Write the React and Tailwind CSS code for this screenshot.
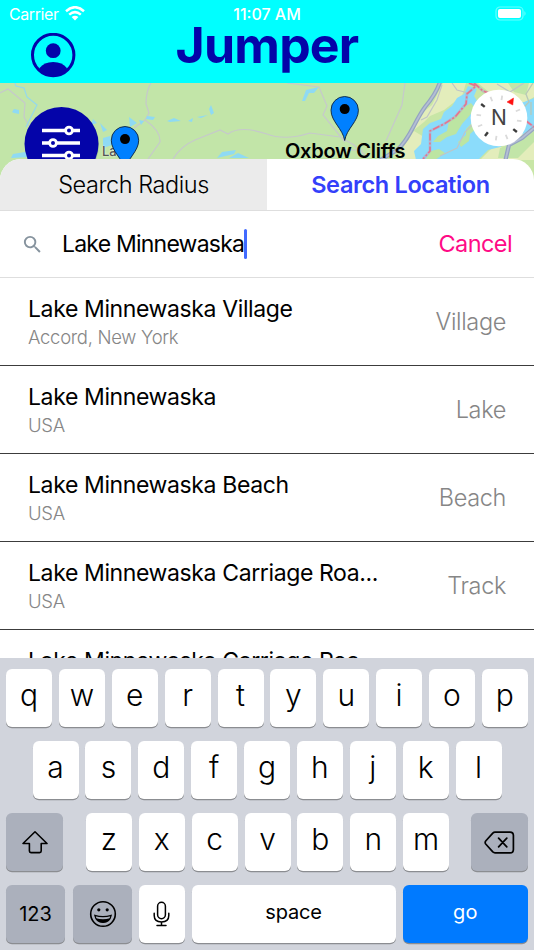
import React from "react";

const results = [
  { title: "Lake Minnewaska Village", place: "Accord, New York", kind: "Village" },
  { title: "Lake Minnewaska", place: "USA", kind: "Lake" },
  { title: "Lake Minnewaska Beach", place: "USA", kind: "Beach" },
  { title: "Lake Minnewaska Carriage Roa...", place: "USA", kind: "Track" },
];

function Key({ children, className = "w-[46px] bg-white" }) {
  return (
    <div className={`flex h-[58px] items-center justify-center rounded-[6px] shadow-[0_1.3px_0_#8b8d91] ${className}`}>
      {children}
    </div>
  );
}

function Letter({ c }) {
  return (
    <Key>
      <span className="relative -top-[3px] text-[30px] font-[350] leading-none text-black">{c}</span>
    </Key>
  );
}

function Pin({ x, y }) {
  return (
    <g transform={`translate(${x} ${y})`}>
      <path d="M0 44 C-2 32 -13.7 25 -13.7 13.7 A13.7 13.7 0 0 1 13.7 13.7 C13.7 25 2 32 0 44Z" fill="#0080ff" stroke="#10243c" strokeWidth="0.9" />
      <circle cx="0" cy="12.6" r="5" fill="#000" />
    </g>
  );
}

const ticks = [0, 30, 60, 90, 120, 150, 180, 210, 240, 270, 300, 330];

function MapView() {
  return (
    <svg className="absolute inset-0" width="534" height="97" viewBox="0 83 534 97">
      <rect y="83" width="534" height="97" fill="#c2e5a8" />
      {/* farmland and river on the east side */}
      <path d="M440 83 L534 83 V180 H398 L400 148 L414 127 L427 105Z" fill="#c8e6a6" />
      <path d="M443 83 H466 L462 96 L444 110 L430 116 L424 122 L414 130 L422 113 L432 105Z M404 146 L414 131 L424 137 L416 160 H398Z M478 83 H534 V97 L522 104 L490 93Z M480 160 L492 148 L510 146 L534 122 V160Z" fill="#e3edbb" />
      <path d="M508 83 H529 L526 95 L514 92Z M500 148 L516 142 L534 130 V142 L518 158 H498Z" fill="#c2e5a8" />
      <path d="M477 89 L468 86 L464 94 L457 98 L452 106 L444 112 L441 119 L430 123 L423 129 L421 144 L414 151 L416 160 L478 160 L488 150 L500 147 L512 140 L534 128 V98 L524 102 L510 103 L480 106 L474 96Z" fill="#8bdcfb" />
      <path d="M466 106 L471 103 L475 108 L470 115 L462 124 L456 134 L447 137 L440 142 L433 142 L438 136 L447 131 L449 121 L457 114Z M425 160 L431 151 L439 149 L445 153 L435 160Z M458 142 L466 135 L466 129 L472 123 L478 127 L470 134 L469 141 L461 147Z" fill="#bce5a2" />
      <path d="M533 83 L526 94 L529 102 L520 111 M531 102 V115" fill="none" stroke="#b8c8b8" strokeWidth="1.3" />
      <path d="M497 84 L510 92 L524 83 M421 120 L427 117 L437 100 L442 85 M440 156 L457 148 L465 132 L475 122 M452 83 L457 90 L468 93" fill="none" stroke="#bfc5c7" strokeWidth="1.2" />
      <path d="M440 82 Q436 94 425 107 C414 122 410 139 397 150 L377 162" fill="none" stroke="#94a3c2" strokeWidth="4.2" />
      <path d="M440 82 Q436 94 425 107 C414 122 410 139 397 150 L377 162" fill="none" stroke="#b4bed4" strokeWidth="1.8" />
      <path d="M505 162 L509 145 L522 138 L534 128" fill="none" stroke="#94a3c2" strokeWidth="4.2" />
      <path d="M505 162 L509 145 L522 138 L534 128" fill="none" stroke="#b4bed4" strokeWidth="1.8" />
      <path d="M469 83 L476 86 L467 94 L466 104 L455 117 L444 124 L430 131 V151 L423 159 M474 83 L483 91 L500 97 M526 121 L534 127" fill="none" stroke="#b9a9c4" strokeWidth="2.8" opacity=".6" />
      <path d="M469 83 L476 86 L467 94 L466 104 L455 117 L444 124 L430 131 V151 L423 159 M474 83 L483 91 L500 97 M526 121 L534 127" fill="none" stroke="#e8738c" strokeWidth="1.6" strokeDasharray="7 2 2 2" />
      {/* paths */}
      <path d="M0 93 L8 89 L25 103 L24 117 L29 126 M151 83 Q146 91 146 104 L149 113 L145 120 Q161 131 160 142 L148 159 M145 120 L134 128 M173 159 Q181 146 195 140 L220 130 L228 134 Q240 125 267 134 Q285 141 310 133 L340 137 L354 145 L367 157 M287 83 L319 87 L327 106 L323 115 L345 142 M405 83 L402 105 L386 141 M345 150 H363" fill="none" stroke="#c6c9cb" strokeWidth="1.2" />
      <path d="M15 83 L16 86 L24 88 L27 97 L37 105 L26 127" fill="none" stroke="#95d9ec" strokeWidth="1.2" />
      <path d="M12 112 L14 109 L19 110 V114 L14 113Z M11 158 L13 154 L25 152 L32 157Z M93 119 L97 123 L91 125Z M100 123 L107 130 L103 132Z M129 117 L137 123 L130 127Z M139 120 L144 121 L141 125Z M147 116 L155 117 L153 120 L146 119Z M167 121 L174 118 L181 121 L170 122Z M188 121 L193 118 L192 122Z M197 117 L208 115 L201 118Z M209 109 L211 105 L214 113 L211 115Z M217 158 L222 152 L236 150 L234 154Z M229 158 L238 153 L249 158Z M302 101 L306 90 L319 87 L314 93 L309 93 L305 101Z M103 138 L110 136 L112 145 L103 148Z" fill="#8fdaf3" />
      <circle cx="62" cy="145" r="37" fill="#59805d" opacity=".25" />
      <circle cx="61.5" cy="144" r="37" fill="#0404a9" />
      <g stroke="#fff" strokeWidth="3.4" fill="#0404a9">
        <path d="M42 130.5 H80 M42 143 H80 M42 155.5 H80" />
        <circle cx="69" cy="130.5" r="3.4" strokeWidth="2.8" />
        <circle cx="53" cy="143" r="3.4" strokeWidth="2.8" />
        <circle cx="69" cy="155.5" r="3.4" strokeWidth="2.8" />
      </g>
    </svg>
  );
}

function MapOverlay() {
  return (
    <svg className="absolute inset-0" width="534" height="97" viewBox="0 83 534 97">
      <Pin x={125} y={126.5} />
      <Pin x={344.7} y={96.5} />
      <circle cx="499" cy="118" r="28.3" fill="#fff" />
      {ticks.map((a, i) => (
        <path key={a} d="M499 95.3 v4.6" transform={`rotate(${a + 38} 499 118)`} stroke={i === 0 ? "#fff" : i % 3 === 0 ? "#3c3c3c" : "#dadada"} strokeWidth={i % 3 === 0 ? 2.4 : 1.8} />
      ))}
      <path d="M513.5 98 L507 102 L512.8 105Z" fill="#ff1010" stroke="#ff1010" strokeWidth=".5" />
    </svg>
  );
}

export default function App() {
  return (
    <div className="flex h-[950px] w-[534px] flex-col overflow-hidden bg-white font-['Inter',sans-serif]">
      <header className="h-[83px] shrink-0 bg-[#00ffff] text-white">
        <div className="flex h-[27px] items-center justify-between pl-[9px] pr-[7px]">
          <div className="flex w-[100px] items-center gap-[6px]">
            <span className="text-[16px] leading-none tracking-[-0.4px]">Carrier</span>
            <svg width="20" height="15" viewBox="0 0 20 15" fill="none" stroke="#fff" strokeWidth="2.5">
              <path d="M1 5.2 Q10 -2.8 19 5.2 M4.2 8.6 Q10 3.6 15.8 8.6" />
              <path d="M6.6 11 Q10 8.3 13.4 11 L10 14.5Z" fill="#fff" stroke="none" />
            </svg>
          </div>
          <span className="relative -left-[1px] text-[16px] font-medium leading-none">11:07 AM</span>
          <div className="flex w-[100px] justify-end">
            <svg width="32" height="16" viewBox="0 0 32 16">
              <rect x="1" y="1" width="27" height="13" rx="4" fill="none" stroke="#fff" strokeOpacity=".4" strokeWidth="1.2" />
              <rect x="3" y="3" width="23" height="9" rx="2" fill="#fff" />
              <path d="M29.5 5 Q31.5 7.5 29.5 10Z" fill="#fff" opacity=".5" />
            </svg>
          </div>
        </div>
        <div className="grid h-[56px] grid-cols-[1fr_auto_1fr] items-start">
          <svg className="ml-[31px] mt-[6px]" width="45" height="45" viewBox="0 0 45 45">
            <circle cx="22.2" cy="22" r="20.7" fill="none" stroke="#0404a9" strokeWidth="3" />
            <circle cx="22.2" cy="17.7" r="7.4" fill="#0404a9" />
            <path d="M8.6 35 Q13 29 22.2 29 Q31.4 29 35.8 35 L36 37 Q22 50 8 37Z" fill="#0404a9" />
          </svg>
          <h1 className="text-[50px] font-bold leading-[36px] tracking-[-0.8px] text-[#0404a9]">Jumper</h1>
        </div>
      </header>

      <section className="relative h-[97px] shrink-0">
        <MapView />
        <span className="absolute left-[102px] top-[60px] text-[13px] font-medium leading-[16px] text-[#555] [text-shadow:0_0_2px_#fff]">La</span>
        <MapOverlay />
        <span className="absolute left-[285px] top-[56px] whitespace-nowrap text-[20px] font-semibold leading-[24px] tracking-[-0.27px] text-black">Oxbow Cliffs</span>
        <span className="absolute left-[491px] top-[23px] text-[21px] leading-[24px] text-[#444]">N</span>
      </section>

      <main className="relative -mt-[21px] h-[499px] shrink-0 overflow-hidden rounded-t-[21px] bg-white">
        <div className="flex h-[52px] border-b border-[#dedede]">
          <div className="flex w-[267px] items-center justify-center bg-[#ebebeb] text-[23.5px] font-light tracking-[-0.45px] text-black">
            <span>Search Radius</span>
          </div>
          <div className="flex w-[267px] items-center justify-center text-[23.5px] font-semibold tracking-[-0.35px] text-[#3340fa]">
            <span>Search Location</span>
          </div>
        </div>
        <div className="flex h-[67px] items-center border-b border-[#dedede] pl-[21px] pr-[22px]">
          <svg width="23" height="23" viewBox="0 0 24 24" fill="#86939e">
            <path d="M15.5 14h-.79l-.28-.27A6.47 6.47 0 0 0 16 9.5 6.5 6.5 0 1 0 9.5 16c1.61 0 3.09-.59 4.23-1.57l.27.28v.79l5 4.99L20.49 19l-4.99-5zm-6 0C7.01 14 5 11.99 5 9.5S7.01 5 9.5 5 14 7.01 14 9.5 11.99 14 9.5 14z" />
          </svg>
          <span className="ml-[18px] text-[23px] tracking-[-0.78px] text-black">Lake Minnewaska</span>
          <span className="h-[30px] w-[2.5px] shrink-0 rounded bg-[#416aff]" />
          <span className="ml-auto text-[23.5px] tracking-[-0.6px] text-[#ff0a86]">Cancel</span>
        </div>
        {results.map((r) => (
          <div key={r.title} className="flex h-[88px] items-center justify-between border-b border-[#3c3c3c] pl-[28px] pr-[28px]">
            <div className="flex flex-col">
              <span className="text-[23px] leading-[30px] tracking-[-0.38px] text-black">{r.title}</span>
              <span className="text-[18.5px] font-[350] leading-[26px] tracking-[-0.3px] text-[#868686]">{r.place}</span>
            </div>
            <span className="text-[23.5px] font-[350] tracking-[-0.35px] text-[#868686]">{r.kind}</span>
          </div>
        ))}
        <div className="pl-[28px] pt-[16px] text-[23px] leading-[30px] tracking-[-0.38px] text-black">Lake Minnewaska Carriage Roa...</div>
      </main>

      <footer className="flex h-[292px] shrink-0 flex-col gap-[14.1px] bg-[#d1d4dc] pl-[6px] pr-[6px] pt-[11px]">
        <div className="flex justify-between">
          {"qwertyuiop".split("").map((c) => <Letter key={c} c={c} />)}
        </div>
        <div className="flex justify-between px-[26.5px]">
          {"asdfghjkl".split("").map((c) => <Letter key={c} c={c} />)}
        </div>
        <div className="flex justify-between">
          <Key className="w-[57px] bg-[#abb0bc]">
            <svg width="26" height="24" viewBox="0 0 26 24" fill="none" stroke="#000" strokeWidth="1.6" strokeLinejoin="round">
              <path d="M13 1.8 L25 13.5 H19.2 V21 Q19.2 22.6 17.6 22.6 H9 Q7.4 22.6 7.4 21 V13.5 H1Z" />
            </svg>
          </Key>
          <div className="ml-[1px] flex gap-[6.9px]">
            {"zxcvbnm".split("").map((c) => <Letter key={c} c={c} />)}
          </div>
          <Key className="w-[57px] bg-[#abb0bc]">
            <svg width="31" height="23" viewBox="0 0 31 23" fill="none" stroke="#000" strokeWidth="1.7" strokeLinejoin="round" strokeLinecap="round">
              <path d="M11 1.2 H26 Q29.4 1.2 29.4 4.6 V18.4 Q29.4 21.8 26 21.8 H11 Q9.8 21.8 8.8 20.9 L1.7 13 Q.6 11.5 1.7 10 L8.8 2.1 Q9.8 1.2 11 1.2Z M14.6 7.2 L22.8 15.8 M22.8 7.2 L14.6 15.8" />
            </svg>
          </Key>
        </div>
        <div className="flex gap-[7px]">
          <Key className="w-[59px] bg-[#abb0bc]"><span className="text-[20px]">123</span></Key>
          <Key className="ml-[1px] w-[59px] bg-[#abb0bc]">
            <svg width="28" height="28" viewBox="0 0 28 28" fill="none" stroke="#000" strokeWidth="1.6">
              <circle cx="14" cy="14" r="12.3" />
              <circle cx="9.8" cy="9.8" r="1.6" fill="#000" stroke="none" />
              <circle cx="18.2" cy="9.8" r="1.6" fill="#000" stroke="none" />
              <path d="M5.8 15.4 Q14 18 22.2 15.4 Q20.8 22.4 14 22.4 Q7.2 22.4 5.8 15.4Z" strokeWidth="1.2" />
              <path d="M7 18.2 Q14 20.4 21 18.2 Q19 22.4 14 22.4 Q9 22.4 7 18.2Z" fill="#000" stroke="none" />
            </svg>
          </Key>
          <Key className="w-[45.5px] bg-white">
            <svg width="17" height="26" viewBox="0 0 17 26" fill="none" stroke="#000" strokeWidth="1.5" strokeLinecap="round">
              <rect x="4.6" y="1.3" width="7.8" height="16.4" rx="3.9" />
              <path d="M1.2 12.2 V14.6 Q1.2 21 8.5 21 Q15.8 21 15.8 14.6 V12.2 M8.5 21 V24.5 M4 24.6 H13" />
            </svg>
          </Key>
          <Key className="w-[204px] bg-white"><span className="relative -top-[2px] text-[20px] tracking-[-0.2px]">space</span></Key>
          <Key className="flex-1 bg-[#007aff]"><span className="relative -top-[2px] text-[20px] text-white">go</span></Key>
        </div>
      </footer>
    </div>
  );
}
